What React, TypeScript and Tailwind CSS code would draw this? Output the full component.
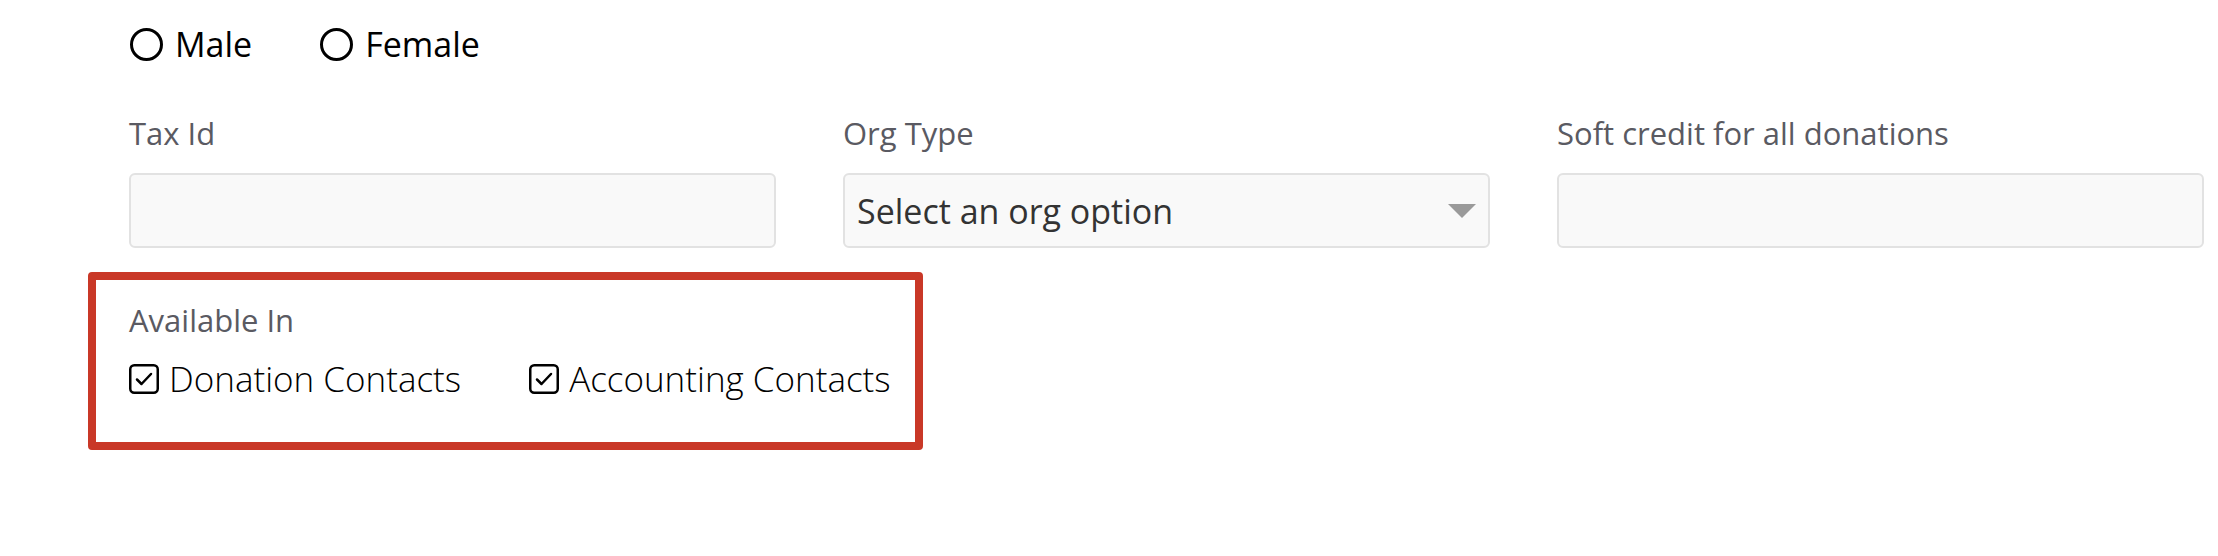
import React from "react";

// Radio option with an empty circle
function Radio({ label }: { label: string }) {
  return (
    <label className="flex items-center gap-[12px] mr-[68px] whitespace-nowrap">
      <span className="shrink-0 w-[33px] h-[33px] rounded-full border-[3px] border-black" />
      <span className="text-[34px] leading-[34px] text-black">{label}</span>
    </label>
  );
}

// Checked box drawn as svg
function CheckBox({ label }: { label: string }) {
  return (
    <label className="flex items-center gap-[10px] mr-[68px] whitespace-nowrap shrink-0">
      <svg className="shrink-0" width="30" height="30" viewBox="0 0 30 30" fill="none">
        <rect x="1.25" y="1.25" width="27.5" height="27.5" rx="4" stroke="#000" strokeWidth="2.5" />
        <path d="M8 15.5l4.5 4.5L22 10" stroke="#000" strokeWidth="2.5" strokeLinecap="round" strokeLinejoin="round" />
      </svg>
      <span className="text-[35px] leading-[35px] font-light text-black">{label}</span>
    </label>
  );
}

const fieldClass =
  "h-[75px] w-full rounded-[6px] border-2 border-[#e2e2e2] bg-[#f9f9f9]";

export default function App() {
  return (
    <div className="w-full h-[556px] bg-white font-['Open_Sans',sans-serif]">
      {/* Gender */}
      <div className="flex items-center h-[34px] mt-[27px] pl-[130px]">
        <Radio label="Male" />
        <Radio label="Female" />
      </div>

      {/* Three fields */}
      <div className="grid grid-cols-3 gap-x-[67px] pl-[129px] pr-[14px] mt-[57px]">
        <div>
          <div className="text-[31px] leading-[30px] text-[#5a5a62]">Tax Id</div>
          <div className={`${fieldClass} mt-[25px]`} />
        </div>
        <div>
          <div className="text-[31px] leading-[30px] text-[#5a5a62]">Org Type</div>
          <div className={`${fieldClass} mt-[25px] flex items-center justify-between pl-[12px] pr-[12px]`}>
            <span className="text-[34px] leading-[34px] text-[#333333]">Select an org option</span>
            <svg width="28" height="14" viewBox="0 0 28 14">
              <path d="M0 0h28L14 14z" fill="#9a9a9a" />
            </svg>
          </div>
        </div>
        <div>
          <div className="text-[31px] leading-[30px] text-[#5a5a62]">Soft credit for all donations</div>
          <div className={`${fieldClass} mt-[25px]`} />
        </div>
      </div>

      {/* Available In, highlighted */}
      <div className="ml-[88px] mt-[24px] w-[835px] border-[8px] border-[#c93827] rounded-[4px] pl-[33px] pt-[25px] pb-[46px]">
        <div className="text-[31px] leading-[30px] text-[#5a5a62]">Available In</div>
        <div className="flex items-center h-[35px] mt-[26px]">
          <CheckBox label="Donation Contacts" />
          <CheckBox label="Accounting Contacts" />
        </div>
      </div>
    </div>
  );
}
